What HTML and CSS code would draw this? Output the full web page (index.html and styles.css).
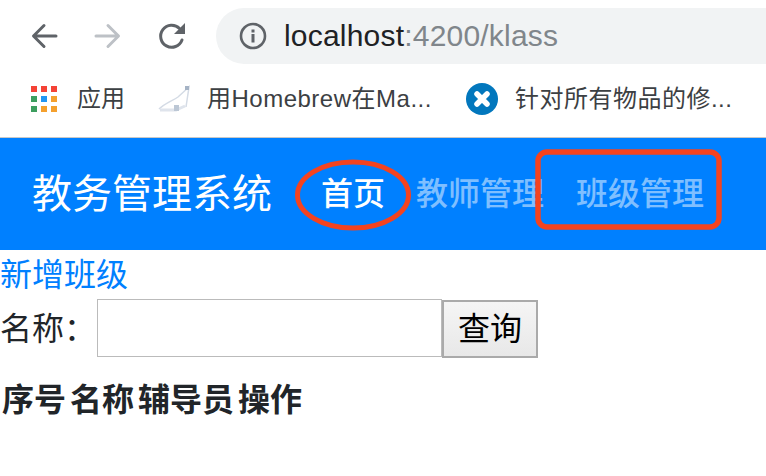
FILE: index.html
```html
<!DOCTYPE html>
<html lang="zh-CN">
<head>
<meta charset="utf-8">
<title>教务管理系统</title>
<link rel="stylesheet" href="styles.css">
</head>
<body>
<header class="chrome">
  <div class="toolbar">
    <svg class="tool-icon" viewBox="0 0 28 28"><path d="M26 14H4M14 3.500 3.500 14 14 24.500" fill="none" stroke="#5f6368" stroke-width="3" stroke-linecap="round" stroke-linejoin="round"/></svg>
    <svg class="tool-icon" viewBox="0 0 28 28"><path d="M2 14H24M14 3.500 24.500 14 14 24.500" fill="none" stroke="#bdc1c6" stroke-width="3" stroke-linecap="round" stroke-linejoin="round"/></svg>
    <svg class="tool-icon" viewBox="0 0 28 28"><path d="M24 18A11 11 0 1 1 21.500 6.500" fill="none" stroke="#5f6368" stroke-width="3" stroke-linecap="round"/><path d="M27 1V12H16Z" fill="#5f6368"/></svg>
    <div class="omnibox">
      <svg class="info-icon" viewBox="0 0 28 28"><circle cx="14" cy="14" r="12" fill="none" stroke="#5f6368" stroke-width="2.600"/><rect x="12.500" y="12" width="3" height="8.500" fill="#5f6368"/><rect x="12.500" y="7.500" width="3" height="3" fill="#5f6368"/></svg>
      <span class="url">localhost<span class="url-dim">:4200/klass</span></span>
    </div>
  </div>
  <div class="bookmarks">
    <div class="bookmark bookmark-apps">
      <div class="apps">
        <i class="dot red"></i><i class="dot red"></i><i class="dot red"></i>
        <i class="dot green"></i><i class="dot blue"></i><i class="dot orange"></i>
        <i class="dot green"></i><i class="dot orange"></i><i class="dot orange"></i>
      </div>
      <span>应用</span>
    </div>
    <div class="bookmark">
      <svg class="fav" viewBox="0 0 32 28"><path d="M1 24C7 18 14 16 20 12L31 2L28 22" fill="none" stroke="#d4dbe5" stroke-width="1.500"/><path d="M2 25H18L27 21" fill="none" stroke="#dfe4ec" stroke-width="3"/><rect x="16" y="20" width="5" height="6" fill="#bcc7d5"/><rect x="27" y="1" width="4" height="4" fill="#a5b3c5"/></svg>
      <span>用Homebrew在Ma...</span>
    </div>
    <div class="bookmark">
      <svg class="fav-x" viewBox="0 0 32 32"><circle cx="16" cy="16" r="16" fill="#0277bd"/><path d="M11 11 21 21M21 11 11 21" stroke="#fff" stroke-width="5.500" stroke-linecap="round"/></svg>
      <span>针对所有物品的修...</span>
    </div>
  </div>
</header>
<nav class="navbar">
  <a class="brand">教务管理系统</a>
  <a class="nav-link active">首页</a>
  <a class="nav-link">教师管理</a>
  <a class="nav-link">班级管理</a>
  <svg class="marks" viewBox="0 0 766 112"><ellipse cx="353" cy="57" rx="55.500" ry="33" fill="none" stroke="#f4431f" stroke-width="5"/><rect x="538" y="14" width="181" height="75" rx="9" fill="none" stroke="#f4431f" stroke-width="5.500"/></svg>
</nav>
<main>
  <a class="add-link">新增班级</a>
  <form class="search">
    <label class="search-label">名称：</label>
    <input class="search-input" type="text">
    <button class="search-btn" type="button">查询</button>
  </form>
  <table class="table">
    <thead><tr><th>序号</th><th>名称</th><th>辅导员</th><th>操作</th></tr></thead>
  </table>
</main>
</body>
</html>
```

FILE: styles.css
```css
* { box-sizing: border-box; }
html, body { margin: 0; padding: 0; overflow: hidden; }
body {
  width: 766px;
  height: 476px;
  background: #fff;
  color: #212529;
  font-family: "Liberation Sans", "Noto Sans CJK SC", sans-serif;
  font-size: 32px;
  line-height: 48px;
}
.chrome { height: 138px; border-bottom: 1px solid #c8c8c8; overflow: hidden; }
.toolbar { display: flex; align-items: center; height: 72px; padding-left: 30px; }
.tool-icon { width: 28px; height: 28px; margin-right: 36px; flex: none; }
.tool-icon:nth-child(3) { margin-right: 30px; }
.omnibox {
  flex: 1;
  display: flex;
  align-items: center;
  height: 56px;
  margin-right: -40px;
  padding-left: 23px;
  background: #f1f3f4;
  border-radius: 28px;
}
.info-icon { width: 28px; height: 28px; margin-right: 17px; flex: none; }
.url { font-size: 30px; line-height: 32px; letter-spacing: 0.2px; color: #202124; }
.url-dim { color: #80868b; }
.bookmarks {
  display: flex;
  align-items: center;
  height: 54px;
  padding-left: 31px;
  color: #3c4043;
  font-size: 24px;
  letter-spacing: 0.5px;
  line-height: 30px;
}
.bookmark { display: flex; align-items: center; margin-right: 34px; white-space: nowrap; }
.bookmark-apps { margin-right: 33px; letter-spacing: 0; }
.apps { display: grid; grid-template-columns: repeat(3, 6px); gap: 4px; margin-right: 20px; }
.dot { display: block; width: 6px; height: 6px; }
.red { background: #f44336; }
.green { background: #3d9e5f; }
.blue { background: #2196f3; }
.orange { background: #f4a02e; }
.fav { width: 32px; height: 28px; margin-right: 17px; }
.fav-x { width: 32px; height: 32px; margin-right: 17px; }
.navbar {
  position: relative;
  display: flex;
  align-items: center;
  height: 112px;
  padding-left: 32px;
  background: #0080ff;
}
.brand { color: #fff; font-size: 40px; line-height: 60px; margin-right: 49px; white-space: nowrap; }
.nav-link { color: rgba(255, 255, 255, 0.5); font-size: 32px; font-weight: 500; white-space: nowrap; margin-right: 32px; }
.nav-link.active { color: #fff; margin-right: 31px; }
.marks { position: absolute; left: 0; top: 0; width: 766px; height: 112px; pointer-events: none; }
.add-link { display: block; color: #0080ff; height: 49px; padding-top: 1px; }
.search { display: flex; align-items: flex-start; height: 60px; }
.search-label { width: 97px; flex: none; white-space: nowrap; padding-top: 6px; }
.search-input {
  width: 345px;
  height: 58px;
  padding: 0;
  background: #fff;
  border: 1px solid #bbb;
}
.search-btn {
  width: 96px;
  height: 58px;
  margin-top: 1px;
  padding: 0;
  color: #000;
  font: inherit;
  line-height: 1;
  background: linear-gradient(#f5f5f5, #e8e8e8);
  border: 2px solid #aaa;
}
.table { border-collapse: separate; border-spacing: 0; margin-top: 16px; }
.table th { padding: 2px; font-size: 32px; font-weight: 700; line-height: 46px; text-align: left; }
```
